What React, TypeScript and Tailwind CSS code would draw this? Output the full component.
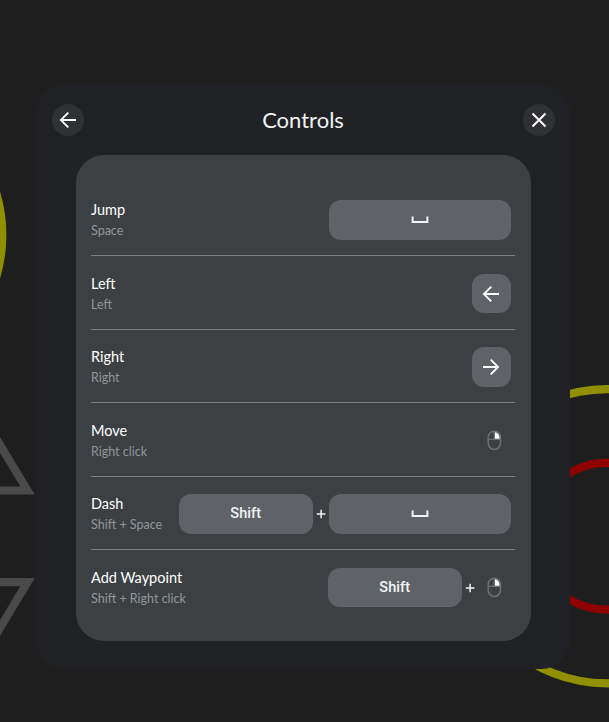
import React from "react";

const labelFont = "font-['Lato','Open_Sans',sans-serif]";

function Arrow({ right = false }: { right?: boolean }) {
  return (
    <svg width="20" height="20" viewBox="0 0 20 20" fill="none" stroke="#fff" strokeWidth="1.9" className={right ? "rotate-180" : ""}>
      <path d="M18 10H3.2M10.3 2.6L2.9 10l7.4 7.4" />
    </svg>
  );
}

function SpaceGlyph() {
  return (
    <svg width="18" height="8" viewBox="0 0 18 8" fill="none" stroke="#f1f3f4" strokeWidth="2">
      <path d="M1.6 .5V6H16.4V.5" />
    </svg>
  );
}

function Mouse() {
  return (
    <div className="flex h-[40px] w-[33px] items-center justify-center">
      <svg width="15" height="21" viewBox="0 0 15 21" fill="none">
        <rect x="1.2" y="1.2" width="12.3" height="18.2" rx="6.1" stroke="#6c7074" strokeWidth="1.5" />
        <path d="M1.2 9.4H13.5M7.3 1.2V9.4" stroke="#6c7074" strokeWidth="1.4" />
        <path d="M8 2.2c2.4.3 4.2 2.300 4.500 4.800V8.700H8z" fill="#fff" />
      </svg>
    </div>
  );
}

function Key({ className, children }: { className: string; children: React.ReactNode }) {
  return (
    <div className={`flex h-[39.5px] items-center justify-center rounded-[12px] bg-[#5f6368] font-['Roboto',sans-serif] text-[14.5px] font-medium tracking-[0.1px] text-[#f1f3f4] ${className}`}>
      {children}
    </div>
  );
}

function Plus() {
  return (
    <svg width="16" height="10" viewBox="0 0 16 10" stroke="#f1f3f4" strokeWidth="1.5">
      <path d="M3.800 5H12.400M8.100 .7V9.300" />
    </svg>
  );
}

function Row({ title, sub, titleClass, subClass, last, children }: {
  title: string; sub: string; titleClass: string; subClass: string; last?: boolean; children: React.ReactNode;
}) {
  return (
    <div className={`flex h-[73.55px] justify-between pt-[17.5px] pr-[4px] ${last ? "" : "border-b border-[#7b7f83]"}`}>
      <div className={`whitespace-nowrap ${labelFont}`}>
        <div className={`text-[14.5px] leading-[20px] text-white ${titleClass}`}>{title}</div>
        <div className={`mt-[2px] text-[12.5px] leading-[18px] text-[#91969a] ${subClass}`}>{sub}</div>
      </div>
      <div className="flex h-[40px] items-center">{children}</div>
    </div>
  );
}

export default function App() {
  return (
    <div className="relative h-[722px] w-[609px] overflow-hidden bg-[#1e1e1e] pt-[84px] pl-[36px]">
      <svg className="absolute inset-0" width="609" height="722" fill="none" strokeWidth="8.2">
        <circle cx="-143.700" cy="235" r="146" stroke="#8f8f00" />
        <circle cx="607" cy="536.2" r="147.100" stroke="#8f8f00" />
        <circle cx="607" cy="536.2" r="73.400" stroke="#8f0000" />
        <path d="M27.500 490.500L-22 408.300L-72 490.500Z" stroke="#4a4a4a" />
        <path d="M27.500 582.200L-22 664.400L-72 582.200Z" stroke="#4a4a4a" />
      </svg>
      <main className="relative h-[584.5px] w-[534px] rounded-[29px] bg-[#202124]">
        <header className="flex h-[71px] items-center justify-between px-[15.5px]">
          <button className="flex size-[32px] items-center justify-center rounded-full bg-[#303134]">
            <Arrow />
          </button>
          <h1 className={`text-[22px] text-[#f1f3f4] ${labelFont}`}>Controls</h1>
          <button className="flex size-[32px] items-center justify-center rounded-full bg-[#303134]">
            <svg width="16" height="16" viewBox="0 0 16 16" stroke="#fff" strokeWidth="2">
              <path d="M1.500 1.500L14.500 14.500M14.500 1.500L1.500 14.500" />
            </svg>
          </button>
        </header>
        <section className="ml-[39.700px] h-[486px] w-[455px] rounded-[28px] bg-[#3c4043] pt-[27.500px] pr-[15.700px] pl-[15.300px]">
          <Row title="Jump" sub="Space" titleClass="" subClass="">
            <Key className="w-[182px]"><SpaceGlyph /></Key>
          </Row>
          <Row title="Left" sub="Left" titleClass="" subClass="">
            <Key className="w-[39.5px]"><Arrow /></Key>
          </Row>
          <Row title="Right" sub="Right" titleClass="" subClass="">
            <Key className="w-[39.5px]"><Arrow right /></Key>
          </Row>
          <Row title="Move" sub="Right click" titleClass="" subClass="">
            <Mouse />
          </Row>
          <Row title="Dash" sub="Shift + Space" titleClass="" subClass="">
            <Key className="w-[134.5px]">Shift</Key>
            <Plus />
            <Key className="w-[182px]"><SpaceGlyph /></Key>
          </Row>
          <Row title="Add Waypoint" sub="Shift + Right click" titleClass="" subClass="" last>
            <Key className="w-[134.5px]">Shift</Key>
            <Plus />
            <Mouse />
          </Row>
        </section>
      </main>
    </div>
  );
}
